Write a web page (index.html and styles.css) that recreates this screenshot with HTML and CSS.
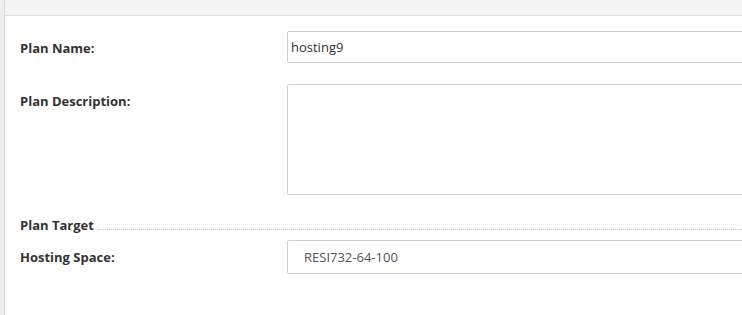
FILE: index.html
```html
<!DOCTYPE html>
<html>
<head>
<meta charset="utf-8">
<link rel="stylesheet" href="styles.css">
</head>
<body>
<div class="page">
  <div class="side"></div>
  <div class="main">
    <div class="header"></div>
    <form class="form">
      <div class="row">
        <label class="label" for="pn">Plan Name:</label>
        <input class="control input" id="pn" type="text" value="hosting9">
      </div>
      <div class="row row-last">
        <label class="label" for="pd">Plan Description:</label>
        <textarea class="control textarea" id="pd"></textarea>
      </div>
      <div class="legend">
        <span class="legend-text">Plan Target</span>
        <span class="legend-line"></span>
      </div>
      <div class="row">
        <label class="label" for="hs">Hosting Space:</label>
        <select class="control select" id="hs"><option>RESI732-64-100</option></select>
      </div>
    </form>
  </div>
</div>
</body>
</html>
```
FILE: styles.css
```css
html, body {
  margin: 0;
  padding: 0;
  background: #fff;
  overflow: hidden;
}
body {
  font-family: "Open Sans", "Liberation Sans", sans-serif;
  font-size: 13px;
  color: #333;
}
.page {
  display: flex;
  height: 315px;
  width: 742px;
  overflow: hidden;
}
.side {
  width: 4px;
  flex: none;
  background: #efefef;
  border-right: 1px solid #dcdcdc;
}
.main {
  flex: 1;
  min-width: 0;
  overflow: hidden;
}
.header {
  height: 15px;
  background: #f5f5f5;
  border-bottom: 1px solid #dedede;
}
.form {
  padding: 15px 0 0 15px;
  margin: 0;
  overflow: hidden;
}
.row {
  display: grid;
  grid-template-columns: 267px 520px;
  margin-bottom: 21px;
}
.row-last {
  margin-bottom: 0;
}
.label {
  font-weight: 700;
  padding-top: 7px;
  line-height: 20px;
  color: #333;
}
.control {
  box-sizing: border-box;
  font-family: "Open Sans", "Liberation Sans", sans-serif;
  font-size: 13px;
  border: 1px solid #cfcfcf;
  border-radius: 2px;
  background: #fff;
  margin: 0;
  outline: none;
}
.input {
  height: 32px;
  padding: 0 3px;
  color: #333;
}
.textarea {
  height: 111px;
  padding: 4px 3px;
  resize: none;
  display: block;
}
.select {
  appearance: none;
  -webkit-appearance: none;
  height: 34px;
  padding: 0 16px;
  color: #555;
}
.legend {
  display: flex;
  align-items: flex-start;
  margin-top: 20px;
  margin-bottom: 5px;
}
.legend-text {
  font-weight: 700;
  line-height: 20px;
  margin-right: 4px;
}
.legend-line {
  flex: 1;
  height: 14px;
  border-bottom: 1px dotted #c8c8c8;
}
```
